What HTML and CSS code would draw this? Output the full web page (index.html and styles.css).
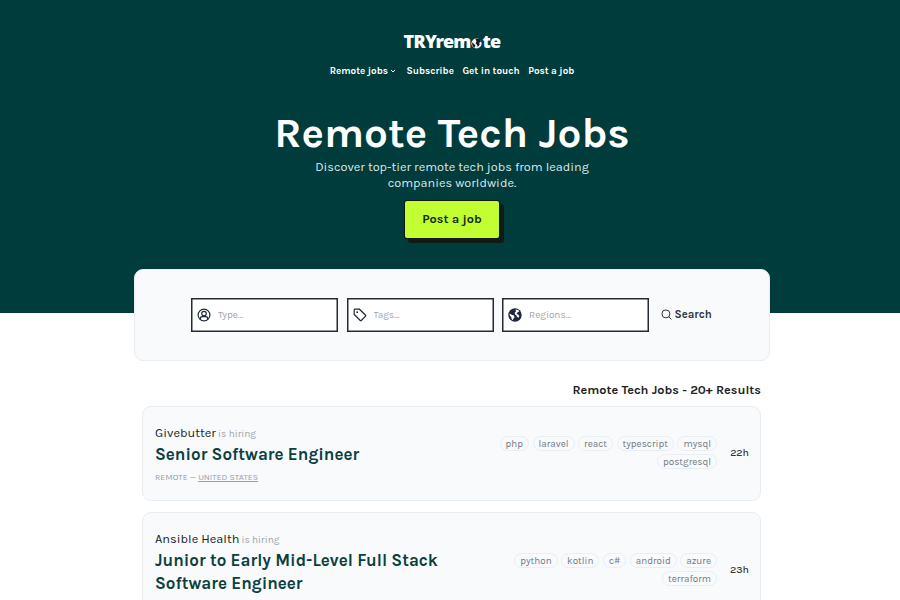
FILE: index.html
```html
<!DOCTYPE html>
<html lang="en">
<head>
    <meta charset="UTF-8">
    <meta name="viewport" content="width=device-width, initial-scale=1.0">
    <title>Remote Tech Jobs</title>
    <link rel="stylesheet" href="styles.css">
</head>
<body>
    <header class="hero">
        <a href="#" class="logo">TRYrem<svg class="logo-globe" viewBox="0 0 14 14">
            <circle cx="7" cy="7" r="6.5"/>
            <path d="M5.5 1L11 1.3 12.8 4.5 10.5 6 11 8.5 8.5 11.5 7.8 8.5 5.8 7 7 4.5Z"/>
            <path d="M1.2 5.5L4 7.5 5.5 9.5 4.5 12.5 2 10.5Z"/>
        </svg>te</a>
        <nav class="nav">
            <a href="#" class="nav-jobs">Remote jobs
                <svg class="chevron" viewBox="0 0 6 6"><path d="M1 2l2 2 2-2"/></svg>
            </a>
            <a href="#">Subscribe</a>
            <a href="#">Get in touch</a>
            <a href="#">Post a job</a>
        </nav>
        <h1>Remote Tech Jobs</h1>
        <p class="lead">Discover top-tier remote tech jobs from leading<br>companies worldwide.</p>
        <a href="#" class="post-btn">Post a job</a>
    </header>

    <form class="search">
        <label class="field">
            <svg class="icon" viewBox="0 0 14 14">
                <circle cx="7" cy="7" r="5.9"/>
                <circle cx="7" cy="5.6" r="2.3"/>
                <path d="M3.4 11.3V10.4Q3.4 8.6 5.4 8.6H8.6Q10.6 8.6 10.6 10.4V11.3"/>
            </svg>
            <input type="text" placeholder="Type...">
        </label>
        <label class="field">
            <svg class="icon" viewBox="0 0 14 14">
                <path d="M2 1.2H6.4L12.6 7.2Q13.1 7.7 12.6 8.2L8.3 12.5Q7.8 13 7.3 12.5L1.2 6.4V2Q1.2 1.2 2 1.2Z"/>
                <circle class="dot" cx="4.2" cy="4.2" r=".9"/>
            </svg>
            <input type="text" placeholder="Tags...">
        </label>
        <label class="field">
            <svg class="icon globe" viewBox="0 0 14 14">
                <circle cx="7" cy="7" r="6.7"/>
                <path d="M7.6 1.6L10.2 1.9 11.2 3.4 9.6 4.3 8.4 6 10.2 6.6 11.3 8.2 10.2 9.8 9 8.7 8.6 7.4 7 6.4 6.8 4.6 8 3.4Z"/>
                <path d="M1.6 5.6L3.6 6.8 5.9 7.6 6.6 9.2 5.4 10.4 4.9 12.2 3.6 10.9 3.2 9 1.8 7.6Z"/>
            </svg>
            <input type="text" placeholder="Regions...">
        </label>
        <button type="button" class="search-btn">
            <svg viewBox="0 0 11 11"><circle cx="4.9" cy="4.9" r="4"/><path d="M7.8 7.8L10.4 10.4"/></svg>
            <span>Search</span>
        </button>
    </form>

    <main class="jobs">
        <h2>Remote Tech Jobs - 20+ Results</h2>

        <article class="job">
            <div class="info">
                <p class="company">Givebutter <small>is hiring</small></p>
                <h3>Senior Software Engineer</h3>
                <p class="place">REMOTE — <a href="#">UNITED STATES</a></p>
            </div>
            <ul class="tags">
                <li>php</li>
                <li>laravel</li>
                <li>react</li>
                <li>typescript</li>
                <li>mysql</li>
                <li>postgresql</li>
            </ul>
            <time>22h</time>
        </article>

        <article class="job tall">
            <div class="info">
                <p class="company">Ansible Health <small>is hiring</small></p>
                <h3>Junior to Early Mid-Level Full Stack Software Engineer</h3>
            </div>
            <ul class="tags">
                <li>python</li>
                <li>kotlin</li>
                <li>c#</li>
                <li>android</li>
                <li>azure</li>
                <li>terraform</li>
            </ul>
            <time>23h</time>
        </article>
    </main>
</body>
</html>
```
FILE: styles.css
```css
* {
    box-sizing: border-box;
}

body {
    margin: 0;
    height: 600px;
    overflow: hidden;
    background: #fff;
    color: #222;
    font-family: Karla, Roboto, sans-serif;
}

a {
    color: inherit;
    text-decoration: none;
}

h1, h2, h3, p, ul {
    margin: 0;
    padding: 0;
}

.hero {
    height: 312.5px;
    padding: 30px 0 0 4px;
    display: flex;
    flex-direction: column;
    align-items: center;
    background: #003c3c;
    color: #fff;
}

.logo {
    display: flex;
    align-items: center;
    height: 22px;
    font: 900 18px/22px "Noto Sans", sans-serif;
    letter-spacing: -0.75px;
}

.logo-globe {
    width: 11px;
    height: 11px;
    margin: 4px 1px 0 0;
    fill: #161c1d;
}

.logo-globe circle {
    fill: #f5f7fa;
}

.nav {
    display: flex;
    gap: 8.5px;
    margin-top: 12px;
    font-size: 9.9px;
    line-height: 13px;
    font-weight: 700;
}

.nav a {
    display: flex;
    align-items: center;
    white-space: nowrap;
}

.chevron {
    width: 6px;
    height: 6px;
    margin: 1px 2px 0 2px;
    fill: none;
    stroke: #fff;
}

h1 {
    margin-top: 33px;
    font-size: 42.3px;
    line-height: 46px;
    font-weight: 700;
}

.lead {
    margin-top: 3px;
    font-size: 12.7px;
    line-height: 15.5px;
    text-align: center;
    color: #dbe9e9;
}

.post-btn {
    margin-top: 11px;
    width: 94px;
    height: 37px;
    border-radius: 2px;
    background: #c1ff32;
    box-shadow: 0 0 0 1px #111a13, 4px 4px 0 1px #111a13;
    color: #142b10;
    font-size: 12.75px;
    line-height: 36px;
    font-weight: 700;
    text-align: center;
}

.search {
    position: relative;
    display: flex;
    width: 635.5px;
    height: 92px;
    margin: -43.5px 0 0 134px;
    padding: 28px 56px;
    gap: 8.5px;
    border: 1px solid #e9edf2;
    border-radius: 9px;
    background: #f8fafc;
}

.field {
    display: flex;
    align-items: center;
    width: 147px;
    height: 34px;
    padding-left: 5px;
    border: 1px solid #252b35;
    box-shadow: inset 0 0 0 0.5px #252b35;
    background: #fff;
}

.icon {
    flex: none;
    width: 14px;
    height: 14px;
    fill: none;
    stroke: #1e293b;
    stroke-width: 1.2;
}

.icon .dot {
    fill: #1e293b;
    stroke: none;
}

.icon.globe {
    fill: #fff;
    stroke: none;
}

.icon.globe circle {
    fill: #1e293b;
}

.field input {
    width: 110px;
    padding: 0;
    margin-left: 7px;
    border: 0;
    background: none;
    font: 10px Karla, Roboto, sans-serif;
}

.field input::placeholder {
    color: #a5a7aa;
}

.search-btn {
    display: flex;
    align-items: center;
    height: 33px;
    margin-left: 3px;
    padding: 0;
    border: 0;
    background: none;
    color: #2c3440;
    font: 700 11.3px Karla, Roboto, sans-serif;
}

.search-btn svg {
    width: 11px;
    height: 11px;
    margin-right: 3px;
    fill: none;
    stroke: #2c3440;
}

.jobs {
    width: 619px;
    margin: 21px 0 0 142px;
}

h2 {
    font-size: 12.7px;
    line-height: 16px;
    font-weight: 700;
    text-align: right;
}

.job {
    display: flex;
    align-items: center;
    height: 95px;
    margin-top: 11px;
    padding: 0 11px 0 12px;
    border: 1px solid #e8edf2;
    border-radius: 9px;
    background: #f8fafc;
}

.job.tall {
    height: 117px;
}

h2 + .job {
    margin-top: 8px;
}

.info {
    align-self: flex-start;
    width: 310px;
    padding-top: 17px;
}

.company {
    font-size: 12.75px;
    line-height: 18px;
    color: #222;
}

.company small {
    margin-left: -1px;
    font-size: 10px;
    color: #a1a5ab;
}

h3 {
    color: #0c4040;
    font-size: 17px;
    line-height: 22.5px;
    font-weight: 700;
}

.place {
    margin-top: 4px;
    font-size: 8.75px;
    line-height: 14px;
    color: #9a9ca8;
}

.place a {
    text-decoration: underline;
}

.tags {
    display: flex;
    flex: 1;
    flex-wrap: wrap;
    justify-content: flex-end;
    gap: 3.5px;
    margin-top: -2px;
    list-style: none;
}

.tags li {
    height: 15px;
    padding: 0 5px;
    border: 1px solid #eaeef3;
    border-radius: 8px;
    color: #747983;
    font-size: 9.9px;
    line-height: 13px;
}

time {
    width: 32px;
    margin-top: -2px;
    color: #333;
    font-size: 10.5px;
    font-weight: 500;
    text-align: right;
}
```
